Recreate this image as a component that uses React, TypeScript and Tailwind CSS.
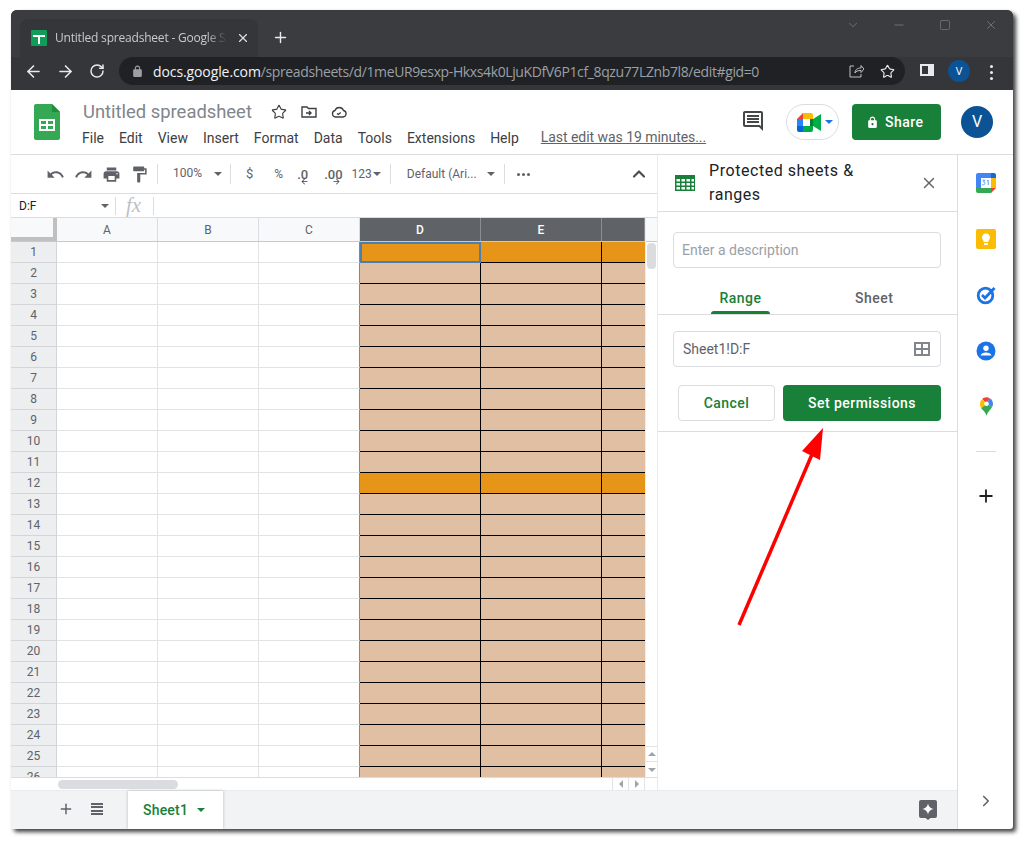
import {
  ArrowLeft,
  ArrowRight,
  RotateCw,
  Star,
  Plus,
  X,
  ChevronDown,
  ChevronUp,
  ChevronRight,
  Minus,
  Square,
} from "lucide-react";

const rows = Array.from({ length: 26 }, (_, i) => i + 1);
const menu = ["File", "Edit", "View", "Insert", "Format", "Data", "Tools", "Extensions", "Help"];

function Mi({ d, className }: { d: string; className?: string }) {
  return (
    <svg viewBox="0 0 24 24" fill="currentColor" className={className}>
      <path d={d} />
    </svg>
  );
}

function Caret({ className }: { className?: string }) {
  return <span className={`w-0 h-0 border-x-[4px] border-x-transparent border-t-[4px] ${className ?? "border-t-[#5f6368]"}`} />;
}

function Sep({ className }: { className?: string }) {
  return <span className={`w-px h-5 bg-[#dadce0] ${className ?? ""}`} />;
}

function ChromeBar() {
  return (
    <div className="bg-[#35363a] text-[#dee1e6]">
      <div className="h-[47px] bg-[#3b3c3f] flex items-end pl-[9px] font-['Open_Sans',sans-serif]">
        <div className="w-[238px] h-[38px] bg-[#35363a] rounded-t-lg flex items-center pl-[11px]">
          <svg viewBox="0 0 16 16" className="w-4 h-4 shrink-0">
            <rect width="16" height="16" rx="1" fill="#0f9d58" />
            <path d="M2 5h12v2H9v7H7V7H2z" fill="#fff" />
          </svg>
          <span className="ml-2 w-[172px] overflow-hidden whitespace-nowrap text-[12px] tracking-[-0.2px] text-[#c8cacd] [mask-image:linear-gradient(to_right,#000_88%,transparent)]">Untitled spreadsheet - Google Sheets</span>
          <X size={14} strokeWidth={2} className="ml-[9px] text-[#dee1e6]" />
        </div>
        <Plus size={17} strokeWidth={2} className="ml-[14px] mb-[11px] text-[#e8eaed]" />
        <div className="ml-auto flex items-center gap-[32px] pr-[15px] mb-[25px] text-[#85878a]">
          <ChevronDown size={14} strokeWidth={1.2} />
          <Minus size={14} strokeWidth={1.2} />
          <Square size={12} strokeWidth={1.2} className="mx-px" />
          <X size={14} strokeWidth={1.2} />
        </div>
      </div>
      <div className="h-[33px] flex items-start pl-[13px] pr-[11px]">
        <ArrowLeft size={19} strokeWidth={2} className="mt-[5px] text-[#e8eaed]" />
        <ArrowRight size={19} strokeWidth={2} className="ml-[13px] mt-[5px] text-[#e8eaed]" />
        <RotateCw size={16} strokeWidth={2.2} className="ml-[14px] mt-[6px] text-[#e8eaed]" />
        <div className="ml-[14px] w-[786px] h-[28px] rounded-full bg-[#202124] flex items-center pl-[12px] pr-[10px] font-['Open_Sans',sans-serif] text-[14px]">
          <Mi className="w-[13px] h-[13px] text-[#9aa0a6]" d="M18 8h-1V6c0-2.76-2.24-5-5-5S7 3.24 7 6v2H6c-1.1 0-2 .9-2 2v10c0 1.1.9 2 2 2h12c1.1 0 2-.9 2-2V10c0-1.1-.9-2-2-2zM9 6c0-1.66 1.34-3 3-3s3 1.34 3 3v2H9V6z" />
          <span className="ml-[9px] whitespace-nowrap tracking-[-0.1px]">
            <span className="text-[#f1f3f4]">docs.google.com</span>
            <span className="text-[#9aa0a6] tracking-[-0.38px]">/spreadsheets/d/1meUR9esxp-Hkxs4k0LjuKDfV6P1cf_8qzu77LZnb7l8/edit#gid=0</span>
          </span>
          <svg viewBox="0 0 16 16" fill="none" stroke="#bdc1c6" strokeWidth="1" className="w-4 h-4 ml-auto">
            <path d="M6 3H2v11h11v-3M7 10c0-3 2-5 6-5V2.500l3 3.500-3 3.500V7.500c-3 0-5 .5-6 2.500z" />
          </svg>
          <Star size={15} strokeWidth={1.8} className="ml-[16px] text-[#e8eaed]" />
        </div>
        <div className="ml-[15px] mt-[7px] w-[14px] h-[12px] border-2 border-[#e8eaed] bg-[#35363a] flex justify-end">
          <span className="w-[4px] bg-[#e8eaed]" />
        </div>
        <div className="ml-[14px] mt-[3px] w-[22px] h-[22px] rounded-full bg-[#0b5394] text-white text-[11px] flex items-center justify-center font-['Open_Sans',sans-serif]">V</div>
        <div className="ml-[20px] mt-[8px] flex flex-col gap-[3px]">
          <span className="w-[3px] h-[3px] rounded-full bg-[#e8eaed]" />
          <span className="w-[3px] h-[3px] rounded-full bg-[#e8eaed]" />
          <span className="w-[3px] h-[3px] rounded-full bg-[#e8eaed]" />
        </div>
      </div>
    </div>
  );
}

function MeetIcon() {
  return (
    <svg viewBox="0 0 24 19" className="w-6 h-[19px]">
      <path d="M0 6 6 0v6z" fill="#ea4335" />
      <path d="M6 0h8a2 2 0 0 1 2 2v4H6z" fill="#fbbc04" />
      <path d="M0 6h6v7H0z" fill="#2684fc" />
      <path d="M0 13h6v6H2a2 2 0 0 1-2-2z" fill="#0066da" />
      <path d="M6 13h10v4a2 2 0 0 1-2 2H6z" fill="#00ac47" />
      <path d="M16 6 24 1v17l-8-5z" fill="#00ac47" />
      <path d="M13 6h3v7h-3z" fill="#00832d" />
      <path d="M6 6h7v7H6z" fill="#fff" />
    </svg>
  );
}

function DocHeader() {
  return (
    <div className="h-[65px] border-b border-[#dadce0] flex items-start shrink-0 font-['Roboto',sans-serif]">
      <svg viewBox="0 0 26 36" className="ml-[23px] mt-[14px] w-[26px] h-[36px] shrink-0">
        <path d="M2 0h16l8 8v26a2 2 0 0 1-2 2H2a2 2 0 0 1-2-2V2a2 2 0 0 1 2-2z" fill="#34a853" />
        <path d="M18 0l8 8h-8z" fill="#1e8e3e" />
        <path d="M5 15h16v12H5zm2 2v3h5v-3zm7 0v3h5v-3zm-7 5v3h5v-3zm7 0v3h5v-3z" fill="#fff" fillRule="evenodd" />
      </svg>
      <div className="ml-[23px] mt-[9px] w-[640px] shrink-0">
        <div className="flex items-center h-[26px]">
          <span className="text-[18.4px] text-[#80868b]">Untitled spreadsheet</span>
          <Star size={16} strokeWidth={1.7} className="ml-[19px] text-[#3c4043]" />
          <svg viewBox="0 0 16 16" fill="none" stroke="#3c4043" strokeWidth="1.400" className="ml-[14px] w-4 h-4">
            <path d="M1 3h5l1.500 1.500H15V13H1zM5 9h5M8 7l2 2-2 2" />
          </svg>
          <svg viewBox="0 0 16 16" fill="none" stroke="#3c4043" strokeWidth="1.300" className="ml-[14px] w-4 h-4">
            <path d="M4.500 13a3.300 3.300 0 0 1-.5-6.500 4.500 4.500 0 0 1 8.500 0 3.300 3.300 0 0 1-.5 6.500zM6 9.500l1.300 1 2.500-2" />
          </svg>
        </div>
        <div className="flex gap-[15px] mt-[3px] text-[14px] leading-[20px] text-[#3c4043] -ml-px">
          {menu.map((m) => (
            <span key={m}>{m}</span>
          ))}
          <span className="ml-[7px] -mt-px text-[#5f6368] underline whitespace-nowrap tracking-[-0.05px]">Last edit was 19 minutes...</span>
        </div>
      </div>
      <Mi
        className="ml-[18px] mt-[19px] w-6 h-6 text-[#444746]"
        d="M22 4c0-1.100-.9-2-2-2H4c-1.100 0-2 .9-2 2v12c0 1.100.9 2 2 2h14l4 4V4zm-2 0v13.170L18.830 16H4V4h16zM6 12h12v2H6zm0-3h12v2H6zm0-3h12v2H6z"
      />
      <div className="ml-[21px] mt-[14px] w-[53px] h-9 rounded-full border border-[#dadce0] flex items-center pl-[10px] gap-[4px]">
        <MeetIcon />
        <Caret className="border-t-[#1a73e8]" />
      </div>
      <div className="ml-[13px] mt-[14px] w-[89px] h-9 rounded bg-[#188038] text-white text-[14px] font-medium tracking-[0.5px] flex items-center gap-[6px] pl-[14px]">
        <Mi className="w-[13px] h-[13px]" d="M18 8h-1V6c0-2.760-2.240-5-5-5S7 3.240 7 6v2H6c-1.100 0-2 .9-2 2v10c0 1.100.9 2 2 2h12c1.100 0 2-.9 2-2V10c0-1.100-.9-2-2-2zm-6 9c-1.100 0-2-.9-2-2s.9-2 2-2 2 .9 2 2-.9 2-2 2zM9 8V6c0-1.660 1.340-3 3-3s3 1.340 3 3v2H9z" />
        Share
      </div>
      <div className="ml-5 mt-4 w-8 h-8 rounded-full bg-[#0b5394] text-white text-[16px] flex items-center justify-center">V</div>
    </div>
  );
}

function Toolbar() {
  return (
    <div className="h-[39px] border-b border-[#dadce0] flex items-center pl-[35px] text-[#5f6368] font-['Roboto',sans-serif] text-[12px] shrink-0">
      <Mi className="w-[19px] h-[19px]" d="M12.500 8c-2.650 0-5.050.99-6.900 2.600L2 7v9h9l-3.620-3.620c1.390-1.160 3.160-1.880 5.120-1.880 3.540 0 6.550 2.310 7.600 5.500l2.370-.78C21.080 11.030 17.150 8 12.500 8z" />
      <Mi className="ml-[9px] w-[19px] h-[19px]" d="M18.400 10.600C16.550 8.990 14.150 8 11.500 8c-4.650 0-8.580 3.030-9.960 7.220L3.900 16c1.050-3.190 4.050-5.500 7.600-5.500 1.950 0 3.730.72 5.120 1.880L13 16h9V7l-3.600 3.600z" />
      <Mi className="ml-[9px] w-[19px] h-[19px]" d="M19 8H5c-1.660 0-3 1.340-3 3v6h4v4h12v-4h4v-6c0-1.660-1.340-3-3-3zm-3 11H8v-5h8v5zm3-7c-.55 0-1-.45-1-1s.45-1 1-1 1 .45 1 1-.45 1-1 1zm-1-9H6v4h12V3z" />
      <Mi className="ml-[9px] w-[19px] h-[19px]" d="M18 4V3c0-.55-.45-1-1-1H5c-.55 0-1 .45-1 1v4c0 .55.45 1 1 1h12c.55 0 1-.45 1-1V6h1v4H9v11c0 .55.45 1 1 1h2c.55 0 1-.45 1-1v-9h8V4h-3z" />
      <Sep className="ml-[8px]" />
      <span className="ml-[15px] -mt-[2px]">100%</span>
      <Caret className="ml-[12px] border-t-[#5f6368]" />
      <Sep className="ml-[8px]" />
      <span className="ml-[15px] text-[13px]">$</span>
      <span className="ml-[21px]">%</span>
      <span className="ml-[14px] relative font-medium text-[13px] leading-none">
        .0
        <Mi className="absolute left-[3px] top-[9px] w-[9px] h-[9px] text-[#3c4043]" d="M20 11H7.830l5.590-5.590L12 4l-8 8 8 8 1.410-1.410L7.830 13H20z" />
      </span>
      <span className="ml-[16px] mr-[1px] relative font-medium text-[13px] leading-none">
        .00
        <Mi className="absolute left-[8px] top-[9px] w-[9px] h-[9px] text-[#3c4043]" d="M4 11h12.170l-5.590-5.590L12 4l8 8-8 8-1.410-1.410L16.170 13H4z" />
      </span>
      <span className="ml-[8px]">123</span>
      <Caret className="ml-[1px]" />
      <Sep className="ml-[9px]" />
      <span className="ml-[16px]">Default (Ari...</span>
      <Caret className="ml-[10px]" />
      <Sep className="ml-[9px]" />
      <span className="ml-[12px] flex gap-[2px]">
        <span className="w-[3px] h-[3px] rounded-full bg-[#5f6368]" />
        <span className="w-[3px] h-[3px] rounded-full bg-[#5f6368]" />
        <span className="w-[3px] h-[3px] rounded-full bg-[#5f6368]" />
      </span>
      <ChevronUp size={20} strokeWidth={2.6} className="ml-auto mr-[8px] text-[#4a4d51]" />
    </div>
  );
}

function FormulaBar() {
  return (
    <div className="h-[24px] border-b border-[#dadce0] flex items-center shrink-0 font-['Roboto',sans-serif]">
      <span className="ml-2 w-[82px] text-[12px] text-[#202124]">D:F</span>
      <Caret />
      <span className="ml-[6px] w-px h-[18px] bg-[#dadce0]" />
      <span className="ml-[10px] font-['Liberation_Serif',serif] italic text-[21px] leading-none text-[#bdc1c6]">fx</span>
      <span className="ml-[12px] w-px h-[18px] bg-[#dadce0]" />
    </div>
  );
}

function HeaderCell({ label, w, dark }: { label: string; w: string; dark?: boolean }) {
  return (
    <div
      className={`${w} shrink-0 h-full flex items-center justify-center text-[12px] border-r ${
        dark ? "bg-[#5f6368] text-white font-medium border-[#8a8d91]" : "bg-[#f8f9fa] text-[#5f6368] border-[#dadce0]"
      }`}
    >
      {label}
    </div>
  );
}

function Row({ n }: { n: number }) {
  const fill = n === 1 || n === 12 ? "bg-[#e69518]" : "bg-[#e0bfa2]";
  const plain = "shrink-0 h-full border-r border-b border-[#e2e3e3]";
  const filled = `shrink-0 h-full border-b border-black ${fill}`;
  return (
    <div className="flex h-[21px] shrink-0">
      <div className="w-[46px] shrink-0 h-full bg-[#eceef0] border-r border-b border-[#d3d5d8] text-[12px] text-[#5f6368] flex items-center justify-center">{n}</div>
      <div className={`${plain} w-[101px]`} />
      <div className={`${plain} w-[101px]`} />
      <div className={`${plain} w-[101px] border-r-[#5b93b8]`} />
      <div className={`${filled} w-[121px] border-r ${n === 1 ? "outline-2 -outline-offset-2 outline-[#4a7fb0]" : ""}`} />
      <div className={`${filled} w-[121px] border-r`} />
      <div className={`${filled} w-[43px]`} />
    </div>
  );
}

function SheetGrid() {
  return (
    <div className="flex-1 min-h-0 flex flex-col font-['Roboto',sans-serif]">
      <div className="flex-1 min-h-0 flex">
        <div className="w-[634px] shrink-0 flex flex-col overflow-hidden">
          <div className="flex h-[24px] shrink-0 border-b border-[#c7c9cc]">
            <div className="w-[46px] shrink-0 h-full bg-[#f8f9fa] border-r-4 border-b-4 border-[#c0c0c0]" />
            <HeaderCell label="A" w="w-[101px]" />
            <HeaderCell label="B" w="w-[101px]" />
            <HeaderCell label="C" w="w-[101px]" />
            <HeaderCell label="D" w="w-[121px]" dark />
            <HeaderCell label="E" w="w-[121px]" dark />
            <HeaderCell label="" w="w-[43px]" dark />
          </div>
          {rows.map((n) => (
            <Row key={n} n={n} />
          ))}
        </div>
        <div className="w-[12px] shrink-0 flex flex-col bg-white border-l border-[#eeeeee]">
          <div className="h-[24px] bg-[#f8f9fa] border-b border-[#c7c9cc] shrink-0" />
          <div className="ml-[1px] mt-[1px] w-[9px] h-[26px] rounded-[4px] bg-[#dadce0]" />
          <div className="mt-auto h-[16px] border-y border-[#e2e3e3] flex items-center justify-center">
            <Caret className="rotate-180 border-t-[#a0a3a7]" />
          </div>
          <div className="h-[15px] flex items-center justify-center">
            <Caret className="border-t-[#a0a3a7]" />
          </div>
        </div>
      </div>
      <div className="h-[13px] shrink-0 border-t border-[#dadce0] flex items-center">
        <div className="ml-[47px] w-[120px] h-[9px] rounded-[5px] bg-[#dadce0]" />
        <div className="ml-auto flex h-full border-l border-[#e2e3e3]">
          <div className="w-4 flex items-center justify-center border-r border-[#e2e3e3]">
            <Caret className="rotate-90 border-t-[#a0a3a7]" />
          </div>
          <div className="w-4 flex items-center justify-center border-r border-[#e2e3e3]">
            <Caret className="-rotate-90 border-t-[#a0a3a7]" />
          </div>
          <div className="w-[12px]" />
        </div>
      </div>
    </div>
  );
}

function ProtectPanel() {
  return (
    <div className="w-[300px] shrink-0 flex flex-col border-l border-[#e8eaed] font-['Roboto',sans-serif] bg-white">
      <div className="h-[57px] border-b border-[#dadce0] flex items-center pl-[17px] pr-[19px] shrink-0">
        <svg viewBox="0 0 20 16" className="w-5 h-4 shrink-0">
          <path d="M0 0h20v16H0zm1.500 4v2.500h3.500V4zm5 0v2.500h3.500V4zm5 0v2.500h3.500V4zm-10 4v2.500h3.500V8zm5 0v2.500h3.500V8zm5 0v2.500h3.500V8zm-10 4v2.500h3.500V12zm5 0v2.500h3.500V12zm5 0v2.500h3.500V12z M16.500 4v2.500H19V4zm0 4v2.500H19V8zm0 4v2.500H19V12z" fill="#188038" fillRule="evenodd" />
        </svg>
        <span className="ml-[14px] w-[170px] text-[16px] leading-[24px] tracking-[0.55px] text-[#202124]">Protected sheets &amp; ranges</span>
        <X size={18} strokeWidth={1.8} className="ml-auto text-[#5f6368]" />
      </div>
      <div className="px-[15px] pt-[20px]">
        <div className="w-[268px] h-9 rounded border border-[#dadce0] flex items-center pl-[8px] text-[14px] text-[#9aa0a6]">Enter a description</div>
      </div>
      <div className="h-[47px] border-b border-[#dadce0] flex text-[14px] shrink-0">
        <div className="ml-[53px] w-[59px] h-full flex flex-col items-center justify-end">
          <span className="text-[#188038] font-medium mb-[2px] tracking-[0.5px]">Range</span>
          <span className="w-[59px] h-[3px] rounded-t bg-[#188038]" />
        </div>
        <span className="ml-[85px] mt-[20px] text-[#5f6368] font-medium tracking-[0.5px]">Sheet</span>
      </div>
      <div className="px-[15px] pt-[16px]">
        <div className="w-[268px] h-9 rounded border border-[#dadce0] flex items-center px-[9px] text-[14px] text-[#5f6368]">
          Sheet1!D:F
          <svg viewBox="0 0 16 16" className="ml-auto mr-px w-4 h-4">
            <path d="M0 1h16v14H0zm2 2v4h5V3zm7 0v4h5V3zm-7 6v4h5V9zm7 0v4h5V9z" fill="#80868b" fillRule="evenodd" />
          </svg>
        </div>
      </div>
      <div className="flex pl-[20px] pt-[18px] pb-[10px] border-b border-[#dadce0] gap-2 text-[14px] font-medium tracking-[0.45px]">
        <div className="w-[97px] h-9 rounded border border-[#dadce0] text-[#188038] flex items-center justify-center">Cancel</div>
        <div className="w-[158px] h-9 rounded bg-[#188038] text-white flex items-center justify-center">Set permissions</div>
      </div>
    </div>
  );
}

function SideBar() {
  return (
    <div className="w-[56px] shrink-0 border-l border-[#dadce0] flex flex-col items-center pl-px font-['Roboto',sans-serif] text-[#444746]">
      <svg viewBox="0 0 20 20" className="mt-[18px] w-5 h-5">
        <path d="M2 0h13v5H5v10H0V2a2 2 0 0 1 2-2z" fill="#4285f4" />
        <path d="M15 0h3a2 2 0 0 1 2 2v3h-5z" fill="#1967d2" />
        <path d="M15 5h5v10h-5z" fill="#fbbc04" />
        <path d="M0 15h15v5H2a2 2 0 0 1-2-2z" fill="#34a853" />
        <path d="M15 15h5l-5 5z" fill="#ea4335" />
        <path d="M5 5h10v10H5z" fill="#fff" />
        <path d="M6.500 7.200h2.400L7.500 9c1 0 1.400.6 1.400 1.300 0 .9-.7 1.500-1.500 1.500-.6 0-1-.2-1.300-.6M11 8l1.200-.8V12" fill="none" stroke="#4285f4" strokeWidth=".8" />
      </svg>
      <svg viewBox="0 0 20 20" className="mt-[36px] w-5 h-5">
        <rect width="20" height="20" rx="2" fill="#fbbc04" />
        <path d="M7.500 13h5v-1.300a4 4 0 1 0-5 0zM8 14h4v2H8z" fill="#fff" />
      </svg>
      <svg viewBox="0 0 20 20" className="mt-[36px] w-5 h-5" fill="none">
        <circle cx="9.500" cy="10.500" r="7.300" stroke="#1a73e8" strokeWidth="2.800" />
        <path d="M6 10l3 3 9.500-10" stroke="#1a73e8" strokeWidth="2.800" />
      </svg>
      <svg viewBox="0 0 20 20" className="mt-[36px] w-5 h-5">
        <circle cx="10" cy="10" r="9.500" fill="#1a73e8" />
        <circle cx="10" cy="7.200" r="2.700" fill="#fff" />
        <path d="M4.500 14.500c.5-2 3-3 5.500-3s5 1 5.500 3z" fill="#fff" />
      </svg>
      <svg viewBox="0 0 14 20" className="mt-[36px] w-[13px] h-[19px]">
        <path d="M7 0c-2 0-3.500.8-4.500 2L7 7l3.500-6C9.500.4 8.300 0 7 0z" fill="#ea4335" />
        <path d="M10.500 1C12.700 2.200 14 4.500 14 7c0 1.300-.4 2.500-1 3.500L7 7z" fill="#4285f4" />
        <path d="M2.500 2C1 3.300 0 5 0 7c0 2 .5 3.500 1.300 4.800L7 7z" fill="#fbbc04" />
        <path d="M13 10.500C11 14 8 16 7 20 6 16 3.500 14.500 1.300 11.800L7 7z" fill="#34a853" />
        <circle cx="7" cy="7" r="2.500" fill="#fff" />
      </svg>
      <span className="mt-[35px] w-5 h-px bg-[#dadce0]" />
      <Plus size={20} strokeWidth={2.2} className="mt-[34px] text-[#202124]" />
      <ChevronRight size={18} strokeWidth={2.2} className="mt-auto mb-[19px] text-[#5f6368]" />
    </div>
  );
}

function SheetBar() {
  return (
    <div className="h-[39px] shrink-0 bg-[#f1f3f4] border-t border-[#e8eaed] flex font-['Roboto',sans-serif]">
      <Plus size={16} strokeWidth={2.2} className="ml-[47px] mt-[10px] text-[#5f6368]" />
      <div className="ml-[17px] mt-[12px] w-3 h-3 flex flex-col justify-between">
        <span className="h-[2px] bg-[#5f6368]" />
        <span className="h-[2px] bg-[#5f6368]" />
        <span className="h-[2px] bg-[#5f6368]" />
        <span className="h-[2px] bg-[#5f6368]" />
      </div>
      <div className="ml-[25px] w-[95px] h-full bg-white shadow-[0_0_3px_rgba(60,64,67,0.3)] flex items-center pl-[15px] text-[14px] font-medium text-[#188038] tracking-[0.2px]">
        Sheet1
        <Caret className="ml-[9px] border-t-[#188038]" />
      </div>
      <svg viewBox="0 0 18 20" className="ml-auto mr-[20px] mt-[9px] w-[18px] h-5">
        <path d="M2 0h14a2 2 0 0 1 2 2v14a2 2 0 0 1-2 2h-4.500L9 20l-2.500-2H2a2 2 0 0 1-2-2V2a2 2 0 0 1 2-2z" fill="#5f6368" />
        <path d="M9 3.500c.6 3 2 4.800 5.500 5.500-3.500.7-4.900 2.500-5.500 5.500-.6-3-2-4.800-5.500-5.500C7 8.300 8.400 6.500 9 3.500z" fill="#fff" />
      </svg>
    </div>
  );
}

export default function App() {
  return (
    <div className="relative w-[1032px] h-[848px] bg-white pt-[10px] pl-[11px] overflow-hidden">
      <div className="w-[1002px] h-[819px] flex flex-col rounded-t-[6px] rounded-b-[3px] bg-white shadow-[3px_3px_4px_rgba(0,0,0,0.75)] overflow-hidden">
        <ChromeBar />
        <DocHeader />
        <div className="flex-1 min-h-0 flex">
          <div className="w-[946px] shrink-0 flex flex-col">
            <div className="flex-1 min-h-0 flex">
              <div className="w-[646px] shrink-0 flex flex-col">
                <Toolbar />
                <FormulaBar />
                <SheetGrid />
              </div>
              <ProtectPanel />
            </div>
            <SheetBar />
          </div>
          <SideBar />
        </div>
      </div>
      {/* red arrow drawn over the page */}
      <svg viewBox="0 0 1032 848" className="absolute inset-0 w-[1032px] h-[848px] pointer-events-none">
        <path d="M739 625 813 452" stroke="#fe0000" strokeWidth="3.500" fill="none" />
        <path d="M823 428 802 451 820 460z" fill="#fe0000" />
      </svg>
    </div>
  );
}
